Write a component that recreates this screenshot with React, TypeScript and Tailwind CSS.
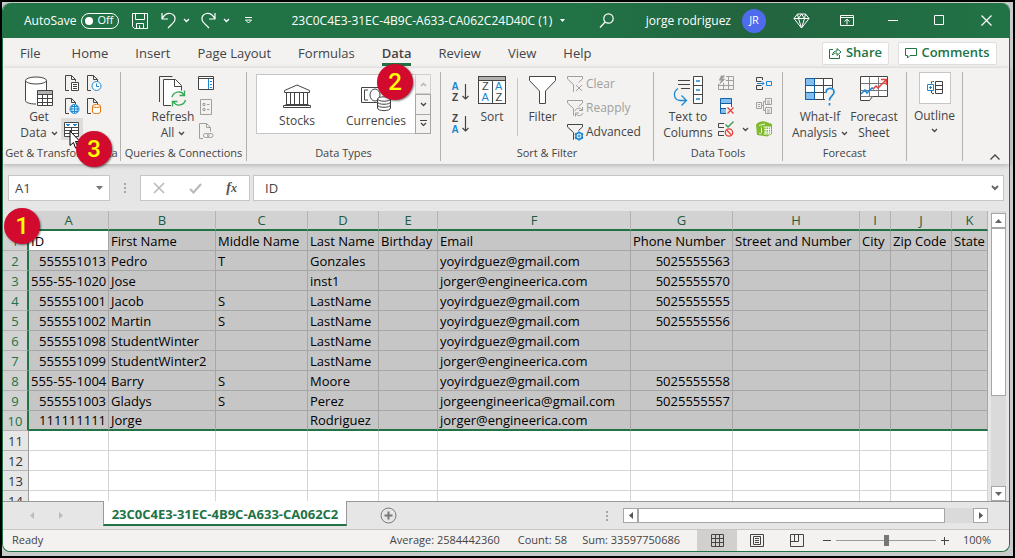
import { useState, type ReactNode } from "react";

const FILE_NAME = "23C0C4E3-31EC-4B9C-A633-CA062C24D40C (1)";
const TABS = ["File", "Home", "Insert", "Page Layout", "Formulas", "Data", "Review", "View", "Help"];

const COLUMNS = [
  { key: "A", width: "w-[80px]" },
  { key: "B", width: "w-[107px]" },
  { key: "C", width: "w-[92px]" },
  { key: "D", width: "w-[71px]" },
  { key: "E", width: "w-[59px]" },
  { key: "F", width: "w-[193px]" },
  { key: "G", width: "w-[102px]" },
  { key: "H", width: "w-[127px]" },
  { key: "I", width: "w-[31px]" },
  { key: "J", width: "w-[61px]" },
  { key: "K", width: "" },
];

const ROWS: string[][] = [
  ["ID", "First Name", "Middle Name", "Last Name", "Birthday", "Email", "Phone Number", "Street and Number", "City", "Zip Code", "State"],
  ["555551013", "Pedro", "T", "Gonzales", "", "yoyirdguez@gmail.com", "5025555563"],
  ["555-55-1020", "Jose", "", "inst1", "", "jorger@engineerica.com", "5025555570"],
  ["555551001", "Jacob", "S", "LastName", "", "yoyirdguez@gmail.com", "5025555555"],
  ["555551002", "Martin", "S", "LastName", "", "yoyirdguez@gmail.com", "5025555556"],
  ["555551098", "StudentWinter", "", "LastName", "", "yoyirdguez@gmail.com", ""],
  ["555551099", "StudentWinter2", "", "LastName", "", "jorger@engineerica.com", ""],
  ["555-55-1004", "Barry", "S", "Moore", "", "yoyirdguez@gmail.com", "5025555558"],
  ["555551003", "Gladys", "S", "Perez", "", "jorgeengineerica@gmail.com", "5025555557"],
  ["111111111", "Jorge", "", "Rodriguez", "", "jorger@engineerica.com", ""],
  [],
  [],
  [],
  [],
];
const LAST_SELECTED = 9;

export default function App() {
  return (
    <div className="h-screen overflow-hidden bg-black p-[2px] font-['Open_Sans','Noto_Sans',sans-serif] text-xs text-[#444]">
      <div className="h-full bg-[#c9cbca] pt-px pr-[3px] pb-1">
        <div className="relative flex h-full flex-col rounded-lg border border-t-0 border-[#217346] bg-[#e6e6e6]">
          <TitleBar />
          <TabBar />
          <Ribbon />
          <FormulaBar />
          <Grid />
          <SheetBar />
          <StatusBar />
          <Badge className="top-[205px] left-[1px]">1</Badge>
          <Badge className="top-[61px] left-[374px]">2</Badge>
          <Badge className="top-[128px] left-[73px]">3</Badge>
        </div>
      </div>
    </div>
  );
}

function Badge({ className, children }: { className: string; children: ReactNode }) {
  return (
    <span
      className={`absolute flex size-9 items-center justify-center rounded-full bg-[#d20a2e] font-['Roboto','Liberation_Sans',sans-serif] text-2xl font-medium text-[#ffff00] shadow-[1px_1px_2px_rgba(0,0,0,0.5)] ${className}`}
    >
      {children}
    </span>
  );
}

function Chevron({ className = "" }: { className?: string }) {
  return (
    <svg width="7" height="5" viewBox="0 0 7 5" className={`inline-block shrink-0 ${className}`} fill="none" stroke="currentColor" strokeWidth="1.3">
      <path d="M1 1l2.500 2.500L6 1" />
    </svg>
  );
}

/* ---------- title bar ---------- */

function TitleBar() {
  const [autoSave, setAutoSave] = useState(false);
  return (
    <header className="flex h-[35px] shrink-0 items-center rounded-t-lg bg-[#217346] pl-[21px] text-white">
      <span>AutoSave</span>
      <button
        role="switch"
        aria-checked={autoSave}
        aria-label="AutoSave"
        onClick={() => setAutoSave(!autoSave)}
        className="ml-[5px] flex h-4 w-[38px] items-center justify-between rounded-full border border-white pr-[5px] pl-[3px] text-[11px]"
      >
        <span className="size-2 rounded-full bg-white" />
        Off
      </button>
      <button aria-label="Save" className="ml-[13px]">
        <svg width="16" height="16" viewBox="0 0 16 16" fill="none" stroke="white">
          <path d="M.5.5h15v15h-13l-2-2zM3.500.5v6h9v-6M4.500 15.500v-5h7v5M7.500 15.500v-3" />
        </svg>
      </button>
      <button aria-label="Undo" className="ml-[13px] flex items-center gap-[7px]">
        <svg width="15" height="17" viewBox="0 0 15 17" fill="none" stroke="white" strokeWidth="1.200">
          <path d="M1 1v6h6M1 7c2-4 5-6 8.500-5.500C13 2 15 5.500 13.500 9c-.7 1.500-3 3.500-6.500 7" />
        </svg>
        <Chevron />
      </button>
      <button aria-label="Redo" className="ml-[11px] flex items-center gap-[7px]">
        <svg width="15" height="17" viewBox="0 0 15 17" fill="none" stroke="white" strokeWidth="1.200">
          <path d="M14 1v6H8M14 7c-2-4-5-6-8.500-5.500C2 2 0 5.500 1.500 9c.7 1.500 3 3.500 6.500 7" />
        </svg>
        <Chevron />
      </button>
      <button aria-label="Customize Quick Access Toolbar" className="ml-[14px]">
        <svg width="9" height="7" viewBox="0 0 9 7" fill="none" stroke="white">
          <path d="M1 .5h7M1.500 3l3 3 3-3z" />
        </svg>
      </button>
      <button className="ml-[38px] flex items-center gap-2 whitespace-nowrap">
        {FILE_NAME}
        <svg width="5" height="3" viewBox="0 0 5 3" fill="white"><path d="M0 0h5L2.500 3z" /></svg>
      </button>
      <div className="ml-3 flex h-full flex-1 items-center justify-end rounded-tr-lg bg-linear-to-r from-[#217346] via-[#22643f] via-40% to-[#217346] pr-[17px]">
        <button aria-label="Search" className="mr-8">
          <svg width="15" height="16" viewBox="0 0 15 16" fill="none" stroke="white" strokeWidth="1.200">
            <circle cx="9.500" cy="5.500" r="4.700" />
            <path d="M6.200 9L1 14.500" />
          </svg>
        </button>
        <span className="whitespace-nowrap">jorge rodriguez</span>
        <button aria-label="Account" className="ml-[11px] size-6 rounded-full bg-[#4f6bed] text-[11px]">JR</button>
        <button aria-label="Premium" className="ml-[27px]">
          <svg width="17" height="16" viewBox="0 0 17 16" fill="none" stroke="white" strokeLinejoin="round">
            <path d="M4.500 1h8L16 5.500 8.500 15 1 5.500zM1 5.500h15M4.500 1l1 4.500 3 9.500 3-9.500 1-4.500M5.500 5.500l3-4.500 3 4.500" />
          </svg>
        </button>
        <button aria-label="Ribbon display options" className="ml-[30px]">
          <svg width="14" height="11" viewBox="0 0 14 11" fill="none" stroke="white">
            <path d="M.5.5h13v10H.5zM.5 2.500h13M7 9.500v-5M4.500 6.500L7 4.200l2.500 2.300" />
          </svg>
        </button>
        <button aria-label="Minimize" className="ml-[34px]">
          <svg width="10" height="10" viewBox="0 0 10 10" stroke="white"><path d="M0 4.500h10" /></svg>
        </button>
        <button aria-label="Maximize" className="ml-9">
          <svg width="11" height="11" viewBox="0 0 11 11" fill="none" stroke="white"><path d="M.5.500h9v9h-9z" /></svg>
        </button>
        <button aria-label="Close" className="ml-9">
          <svg width="11" height="11" viewBox="0 0 11 11" fill="none" stroke="white" strokeWidth="1.200"><path d="M.5.500l10 10M10.500.500l-10 10" /></svg>
        </button>
      </div>
    </header>
  );
}

function TabBar() {
  return (
    <nav className="flex h-[30px] shrink-0 items-center bg-[#f3f2f1] pr-3 pl-[17px] text-[13px]">
      <div className="flex h-full flex-1 items-end gap-[27px] pb-[2px]">
        {TABS.map((tab) => (
          <a
            key={tab}
            href="#"
            className={`border-b-[3px] leading-[19px] whitespace-nowrap first:mr-1 ${
              tab === "Data" ? "border-[#217346] font-semibold" : "border-transparent"
            }`}
          >
            {tab}
          </a>
        ))}
      </div>
      <button className="mr-[9px] flex h-[23px] w-[67px] items-center justify-center gap-1 rounded-xs border border-[#e1dfdd] bg-white font-semibold text-[#217346]">
        <svg width="13" height="12" viewBox="0 0 13 12" fill="none" stroke="currentColor">
          <path d="M4 2.500H.5v9h10V8M3.500 8c.5-3 2-4 4.500-4V1.500L12 5 8 8.500V6C6 6 4.500 6.500 3.500 8z" />
        </svg>
        Share
      </button>
      <button className="flex h-[23px] w-[99px] items-center justify-center gap-1 rounded-xs border border-[#e1dfdd] bg-white font-semibold text-[#217346]">
        <svg width="12" height="11" viewBox="0 0 12 11" fill="none" stroke="currentColor">
          <path d="M.5.500h11v7H5L2.500 10V7.500h-2z" />
        </svg>
        Comments
      </button>
    </nav>
  );
}

/* ---------- ribbon ---------- */

function Group({ label, className, children }: { label: string; className: string; children: ReactNode }) {
  return (
    <section className={`flex shrink-0 flex-col border-r border-[#b3b0ad] ${className}`}>
      <div className="flex flex-1 items-start">{children}</div>
      <h2 className="flex h-4 justify-center text-[11px] leading-4 whitespace-nowrap">{label}</h2>
    </section>
  );
}

function BigButton({
  icon,
  lines,
  menu = false,
  className = "",
}: {
  icon: ReactNode;
  lines: string[];
  menu?: boolean;
  className?: string;
}) {
  return (
    <button className={`flex shrink-0 flex-col items-center pt-1 leading-4 whitespace-nowrap ${className}`}>
      <span className="flex h-[33px] items-start">{icon}</span>
      {lines.map((line, i) => (
        <span key={line} className="flex items-center gap-1">
          {line}
          {menu && i === lines.length - 1 && <Chevron />}
        </span>
      ))}
    </button>
  );
}

function IconButton({ label, className = "", children }: { label: string; className?: string; children: ReactNode }) {
  return (
    <button aria-label={label} className={`flex items-center justify-center ${className}`}>
      {children}
    </button>
  );
}

function Ribbon() {
  return (
    <div className="z-0 flex h-24 shrink-0 bg-[#f3f2f1] pt-1 pb-[3px] shadow-[0_1px_5px_rgba(0,0,0,0.25)]">
      <Group label="Get & Transform Data" className="w-[118px]">
        <BigButton icon={<GetDataIcon />} lines={["Get", "Data"]} menu className="ml-[14px] w-[44px]" />
        <div className="grid grid-cols-[22px_22px]">
          <IconButton label="From Text/CSV" className="h-[22px]">
            <PageIcon>
              <path d="M7.500 7.500h7v8h-7z" fill="white" stroke="#444" />
              <path d="M9 9.500h4M9 11.500h4M9 13.500h4" stroke="#444" />
            </PageIcon>
          </IconButton>
          <IconButton label="Recent Sources" className="h-[22px]">
            <PageIcon>
              <circle cx="10.500" cy="11" r="4.500" fill="white" stroke="#1e88d2" />
              <path d="M10.500 8.500v3h2.500" stroke="#1e88d2" />
            </PageIcon>
          </IconButton>
          <IconButton label="From Web" className="h-6">
            <PageIcon>
              <circle cx="10.500" cy="11" r="4.500" fill="white" stroke="#1e88d2" />
              <path d="M6 11h9M10.500 6.500v9M8.500 7c-1 3-1 5 0 8M12.500 7c1 3 1 5 0 8M7 8.500h7M7 13.500h7" stroke="#1e88d2" />
            </PageIcon>
          </IconButton>
          <IconButton label="Existing Connections" className="h-6">
            <PageIcon>
              <path d="M6.500 8v6c0 2 8 2 8 0V8" fill="white" stroke="#e8740c" />
              <ellipse cx="10.500" cy="8" rx="4" ry="1.500" fill="white" stroke="#e8740c" />
            </PageIcon>
          </IconButton>
          <IconButton label="From Table/Range" className="relative h-[22px] bg-[#dddcdb]">
            <TableIcon />
            <svg width="12" height="19" viewBox="0 0 12 19" className="absolute top-3 left-2" fill="white" stroke="black">
              <path d="M1 1v14.500l3.500-3L6.500 18 9 17l-2.500-5.500H11z" />
            </svg>
          </IconButton>
        </div>
      </Group>

      <Group label="Queries & Connections" className="w-[126px]">
        <BigButton icon={<RefreshIcon />} lines={["Refresh", "All"]} menu className="ml-7 w-[48px]" />
        <div className="ml-[1px] flex flex-col">
          <IconButton label="Queries & Connections" className="h-[22px] w-4">
            <svg width="16" height="14" viewBox="0 0 16 14" fill="none" stroke="#444">
              <path d="M.5.500h15v13H.5z" fill="white" />
              <path d="M.5 2.500h15" />
              <path d="M10.500 3v10" stroke="#1e88d2" />
              <path d="M12 5.500h2M12 8.500h2M12 11.500h2" stroke="#1e88d2" />
            </svg>
          </IconButton>
          <IconButton label="Properties" className="h-[26px] w-4">
            <svg width="12" height="16" viewBox="0 0 12 16" fill="none" stroke="#a19f9d">
              <path d="M.5.500h11v15H.5z" />
              <path d="M3 4.500h2v2H3zM3 9.500h2v2H3zM7 5.500h2.500M7 10.500h2.500" />
            </svg>
          </IconButton>
          <IconButton label="Edit Links" className="h-[22px] w-4">
            <svg width="15" height="16" viewBox="0 0 15 16" fill="none" stroke="#a19f9d">
              <path d="M4 15.500H.5V.500h7l4 4v4M7.500.500v4h4" />
              <rect x="4.500" y="10.500" width="5.500" height="4" rx="2" />
              <rect x="8.500" y="10.500" width="5.500" height="4" rx="2" />
            </svg>
          </IconButton>
        </div>
      </Group>

      <Group label="Data Types" className="w-[194px]">
        <div className="mt-[2px] ml-[9px] flex h-[60px] w-[175px] border border-[#c8c6c4] bg-white">
          <button className="flex w-[80px] flex-col items-center pt-[9px] leading-4">
            <span className="h-[29px]"><BankIcon /></span>
            Stocks
          </button>
          <button className="flex flex-1 flex-col items-center pt-[9px] leading-4">
            <span className="h-[29px]"><MoneyIcon /></span>
            Currencies
          </button>
          <div className="-my-px -mr-px flex w-4 flex-col">
            <IconButton label="Scroll up" className="flex-1 border border-[#d2d0ce] bg-[#f3f2f1] text-[#b3b0ad]">
              <Chevron className="rotate-180" />
            </IconButton>
            <IconButton label="Scroll down" className="flex-1 border border-[#a6a6a6] bg-[#f3f2f1]">
              <Chevron />
            </IconButton>
            <IconButton label="More data types" className="flex-1 border border-t-0 border-[#a6a6a6] bg-[#f3f2f1]">
              <svg width="7" height="7" viewBox="0 0 7 7" fill="none" stroke="currentColor">
                <path d="M0 .5h7M1 3l2.500 2.500L6 3" strokeWidth="1.200" />
              </svg>
            </IconButton>
          </div>
        </div>
      </Group>

      <Group label="Sort & Filter" className="w-[213px]">
        <div className="ml-[10px] flex flex-col gap-[10px] pt-[9px]">
          <IconButton label="Sort A to Z"><SortIcon top="A" bottom="Z" /></IconButton>
          <IconButton label="Sort Z to A"><SortIcon top="Z" bottom="A" /></IconButton>
        </div>
        <BigButton icon={<SortDialogIcon />} lines={["Sort"]} className="ml-[7px] w-[32px]" />
        <span className="mt-[6px] ml-[9px] h-[58px] w-px bg-[#c8c6c4]" />
        <BigButton icon={<FunnelIcon />} lines={["Filter"]} className="ml-[8px] w-[33px]" />
        <div className="ml-[8px] flex flex-col">
          <FilterButton label="Clear" disabled>
            <path d="M9 9l6 6M15 9l-6 6" stroke="#a19f9d" />
          </FilterButton>
          <FilterButton label="Reapply" disabled>
            <path d="M8 11c1-3 5-4 7-1M15.500 7v3.500H12M16 13c-1 3-5 3.500-7 1M8.500 16.500V13H12" stroke="#a19f9d" />
          </FilterButton>
          <FilterButton label="Advanced">
            <circle cx="12" cy="12" r="3.200" stroke="#1e88d2" strokeWidth="1.500" />
            <circle cx="12" cy="12" r="1" stroke="#1e88d2" />
            <path d="M12 7.500v1.300M12 15.200v1.300M8 9.700l1.200.7M14.800 13.600l1.200.7M8 14.300l1.200-.7M14.800 10.400l1.200-.7" stroke="#1e88d2" strokeWidth="2" />
          </FilterButton>
        </div>
      </Group>

      <Group label="Data Tools" className="w-[129px]">
        <BigButton icon={<TextToColumnsIcon />} lines={["Text to", "Columns"]} className="ml-[9px] w-[50px]" />
        <div className="ml-[5px] grid grid-cols-[16px_22px_16px] items-center">
          <IconButton label="Flash Fill" className="h-[22px]"><FlashFillIcon /></IconButton>
          <span />
          <IconButton label="Consolidate" className="h-[22px]">
            <svg width="16" height="13" viewBox="0 0 16 13" fill="none" stroke="#444">
              <path d="M6.500 3V.500h-6v4h5M5.500 8.500h-5v4h6V10" />
              <path d="M1 6.500h7M6 4.500l2 2-2 2" stroke="#1e88d2" />
              <path d="M10.500 4.500h5v4h-5z" stroke="#1e88d2" />
            </svg>
          </IconButton>
          <IconButton label="Remove Duplicates" className="h-6">
            <svg width="16" height="16" viewBox="0 0 16 16" fill="none">
              <path d="M2.500.500h11v15h-11z" fill="white" stroke="#1160a8" />
              <path d="M3 1h10v4H3zM3 11h6v4H3z" fill="#83beec" />
              <path d="M3 5.500h10M3 10.500h10" stroke="#1160a8" />
              <path d="M8 9h8v7H8z" fill="#f3f2f1" />
              <path d="M9.500 9.500l6 6M15.500 9.500l-6 6" stroke="#e8403a" strokeWidth="1.300" />
            </svg>
          </IconButton>
          <span />
          <IconButton label="Relationships" className="h-6">
            <svg width="16" height="16" viewBox="0 0 16 16" fill="none" stroke="#a19f9d">
              <path d="M.5 4.500h5v6h-5zM9.500.500h6v6h-6zM9.500 9.500h6v6h-6zM5.500 7.500h2v-4h2M7.500 7.500v5h2M2 6.500h2M2 8.500h2M11 3h3M11 5h3M11 12h3M11 14h3" />
            </svg>
          </IconButton>
          <IconButton label="Data Validation" className="h-[22px]">
            <svg width="16" height="16" viewBox="0 0 16 16" fill="none" stroke="#444">
              <path d="M6 2.500H.5v4H6M6 10.500H.5v4H6" />
              <path d="M7.500 3.500l2.500 2.500L15.500.5" stroke="#2f9e44" strokeWidth="1.300" />
              <circle cx="11" cy="11.500" r="3.700" stroke="#e8403a" strokeWidth="1.300" />
              <path d="M8.500 9l5 5" stroke="#e8403a" strokeWidth="1.300" />
            </svg>
          </IconButton>
          <Chevron className="justify-self-center" />
          <IconButton label="Manage Data Model" className="h-[22px]">
            <svg width="16" height="16" viewBox="0 0 16 16" fill="none">
              <path d="M0 3.500C3 .5 7-.5 10.500 1L16 3v10l-5 2.500L1 14z" fill="#7fba2c" />
              <path d="M3 4.500l6-1.500M7.500 6h7v7h-7M10 6v7M12.500 6v7M8 8.500h6.500M8 11h6.500M5.500 6.500v5c0 1-1.500 1.500-2.500.5" stroke="white" strokeWidth=".9" />
            </svg>
          </IconButton>
        </div>
      </Group>

      <Group label="Forecast" className="w-[124px]">
        <BigButton icon={<WhatIfIcon />} lines={["What-If", "Analysis"]} menu className="ml-[9px] w-[56px]" />
        <BigButton icon={<ForecastIcon />} lines={["Forecast", "Sheet"]} className="w-[52px]" />
      </Group>

      <Group label="" className="w-[56px]">
        <button className="flex w-full flex-col items-center leading-6">
          <span className="flex size-8 items-center justify-center border border-[#c8c6c4] bg-white">
            <svg width="16" height="14" viewBox="0 0 16 14" fill="none" stroke="#444">
              <path d="M8.500.500h7v12h-7zM8.500 4.500h7M8.500 8.500h7" fill="white" />
              <path d="M4.500 2.500v-2H7M4.500 10v2.500H7" strokeDasharray="2 1" />
              <path d="M.5 3.500h6v6h-6zM2 6.500h3M3.500 5v3" stroke="#1e88d2" />
            </svg>
          </span>
          Outline
          <Chevron />
        </button>
      </Group>

      <button aria-label="Collapse the Ribbon" className="mr-[9px] mb-px ml-auto self-end">
        <svg width="10" height="6" viewBox="0 0 10 6" fill="none" stroke="#444" strokeWidth="1.300"><path d="M.5 5.500L5 1l4.500 4.500" /></svg>
      </button>
    </div>
  );
}

function FilterButton({ label, disabled = false, children }: { label: string; disabled?: boolean; children: ReactNode }) {
  return (
    <button disabled={disabled} className={`flex h-6 items-center gap-[2px] ${disabled ? "text-[#a19f9d]" : ""}`}>
      <svg width="17" height="17" viewBox="0 0 17 17" fill="none">
        <path d="M7 15.500H6.500v-7L.5 3V.500h15V3l-4 3.500" stroke={disabled ? "#a19f9d" : "#444"} />
        {children}
      </svg>
      {label}
    </button>
  );
}

function PageIcon({ children }: { children: ReactNode }) {
  return (
    <svg width="16" height="16" viewBox="0 0 16 16" fill="none">
      <path d="M5 15.500H1.500V.500h6l4 4v2M7.500.500v4h4" stroke="#444" />
      {children}
    </svg>
  );
}

function GetDataIcon() {
  return (
    <svg width="28" height="31" viewBox="0 0 28 31" fill="none" stroke="#444">
      <path d="M.5 4.500v20c0 2 4 3.500 10.500 3.500h1V14.500h9.500v-10" fill="white" stroke="none" />
      <path d="M.5 4.500v20c0 2 4 3.500 10.500 3.500M21.500 4.500V14" />
      <ellipse cx="11" cy="4.500" rx="10.500" ry="3.500" fill="white" />
      <path d="M12.500 14.500h15v15h-15z" fill="white" />
      <path d="M13 15h14v3H13z" fill="#b3b0ad" stroke="none" />
      <path d="M12.500 18.500h15M12.500 22.500h15M12.500 26.500h15M17.500 18v12M22.500 18v12" />
    </svg>
  );
}

function TableIcon() {
  return (
    <svg width="16" height="15" viewBox="0 0 16 15" fill="none" stroke="#444">
      <path d="M.5.500h14v14H.5z" fill="white" />
      <path d="M.5 5.500h14M.5 8.500h14M.5 11.500h14M7.500 5.500v9" />
      <path d="M2 2.500h4M9 2.500h4M3 3.500h2M10 3.500h2" stroke="#1e88d2" />
    </svg>
  );
}

function RefreshIcon() {
  return (
    <svg width="28" height="31" viewBox="0 0 28 31" fill="none">
      <path d="M.5 26V.500h13" stroke="#444" />
      <path d="M4.500 29.500V3.500h12l6 6v5L12 20v9.500z" fill="white" />
      <path d="M12 29.500H4.500V3.500h12l6 6v5M15.500 3.500v7h7" stroke="#444" />
      <path d="M13 21c1.500-5.500 9-7 12-2M25.500 14.500v5h-5M26.500 24c-1.500 5.500-9 7-12 2M13.500 30.500v-5h5" stroke="#35a853" strokeWidth="1.300" />
    </svg>
  );
}

function BankIcon() {
  return (
    <svg width="28" height="25" viewBox="0 0 28 25" fill="none" stroke="#444">
      <path d="M1.500 8.500V6.500L14 1l12.500 5.500v2zM3.500 8.500v12M7.500 8.500v12M11.500 8.500v12M16.500 8.500v12M20.500 8.500v12M24.500 8.500v12M2.500 20.500h23M.5 23.500h27v-2H.5z" />
    </svg>
  );
}

function MoneyIcon() {
  return (
    <svg width="31" height="28" viewBox="0 0 31 28" fill="none" stroke="#444">
      <path d="M.5 3.500h28v15H.5z" />
      <path d="M7 6H3.500v10H7M22 6h3.500v5" />
      <ellipse cx="14" cy="11" rx="5" ry="6" />
      <path d="M16.500 15v9c0 3.500 13 3.500 13 0v-9" fill="white" />
      <ellipse cx="23" cy="15" rx="6.500" ry="2.200" fill="white" />
      <path d="M16.500 18c0 3 13 3 13 0M16.500 21c0 3 13 3 13 0" />
    </svg>
  );
}

function SortIcon({ top, bottom }: { top: string; bottom: string }) {
  return (
    <span className="flex items-center gap-[3px]">
      <span className="w-2 font-['Liberation_Sans',sans-serif] text-[10px] leading-[11px] font-bold">
        <span className={`block ${top === "A" ? "text-[#1e88d2]" : ""}`}>{top}</span>
        <span className={`block ${bottom === "A" ? "text-[#1e88d2]" : ""}`}>{bottom}</span>
      </span>
      <svg width="7" height="17" viewBox="0 0 7 17" fill="none" stroke="#444" strokeWidth="1.200">
        <path d="M3.500 0v15M.5 12l3 3 3-3" />
      </svg>
    </span>
  );
}

function SortDialogIcon() {
  return (
    <span className="flex h-7 w-[28px] flex-col border border-[#444] bg-white font-['Liberation_Sans',sans-serif] text-[11px] leading-[11px]">
      <span className="h-1 shrink-0 border-b border-[#444] bg-[#b3b0ad]" />
      <span className="flex flex-1 text-center">
        <span className="flex-1 border-r border-[#444]">
          <span className="block">Z</span>
          <span className="block text-[#1e88d2]">A</span>
        </span>
        <span className="flex-1">
          <span className="block text-[#1e88d2]">A</span>
          <span className="block">Z</span>
        </span>
      </span>
    </span>
  );
}

function FunnelIcon() {
  return (
    <svg width="28" height="29" viewBox="0 0 28 29" fill="white" stroke="#444">
      <path d="M.5.500h26v4l-10 10.500v12.500h-6V15L.5 4.500z" />
    </svg>
  );
}

function TextToColumnsIcon() {
  return (
    <svg width="31" height="31" viewBox="0 0 31 31" fill="none">
      <path d="M5 4.500h12M5 8.500h12M8 12.500h9" stroke="#444" strokeWidth="1.200" />
      <path d="M5 12.500c-5 3-5 11 2 12h6M8.500 19.500l5 5-5 5" stroke="#1e88d2" strokeWidth="1.300" />
      <path d="M20.500.500h9v27h-9z" fill="white" stroke="#444" />
      <path d="M20.500 9.500h9M20.500 18.500h9" stroke="#444" />
      <path d="M23 5h4M23 14h4M23 23h4" stroke="#1e88d2" strokeWidth="1.300" />
    </svg>
  );
}

function FlashFillIcon() {
  return (
    <svg width="16" height="16" viewBox="0 0 16 16" fill="none" stroke="#a19f9d">
      <path d="M8 1.500h7.500v13H.5V9M10.500 1.500v13M5.500 8v6.500M8 5.500h7.500M6 10.500h9.500M.5 10.500H6" />
      <path d="M3 .5h4L5 4h2.500L1 10l2-4.500H.8z" fill="#a19f9d" stroke="none" />
    </svg>
  );
}

function WhatIfIcon() {
  return (
    <svg width="30" height="31" viewBox="0 0 30 31" fill="none">
      <path d="M.5 2.500h27v21H.5z" fill="white" />
      <path d="M1 3h8v6H1zM1 17h8v6H1z" fill="#83beec" />
      <path d="M.5 2.500h27V13M9.500 2.500v21M18.500 2.500v21M.5 9.500h27M.5 16.500h20M.5 23.500h20" stroke="#444" />
      <path d="M.5 2.500v21h9v-21zM.5 9.500h9M.5 16.500h9" stroke="#1160a8" />
      <path d="M20 12h10v16H20z" fill="#f3f2f1" />
      <path d="M21 17c0-6 8-6 8-1 0 4-4.500 4-4.500 8.500M24.500 27v2.500" stroke="#1e88d2" strokeWidth="1.700" />
    </svg>
  );
}

function ForecastIcon() {
  return (
    <svg width="29" height="28" viewBox="0 0 29 28" fill="none">
      <path d="M.5.500h27v20h-15l-3 4h-9z" fill="white" stroke="#444" />
      <path d="M.5 20.500h12M9.500.500v20M18.500.500v20M.5 7.500h27M.5 14.500h27" stroke="#777" />
      <path d="M1 18l4-4 2 3 5-5 2 1" stroke="#1e88d2" strokeWidth="1.500" />
      <path d="M13 13l3-3 2 2 8-8M21 3.500h5.500V9" stroke="#e8403a" strokeWidth="1.500" />
    </svg>
  );
}

/* ---------- formula bar ---------- */

function FormulaBar() {
  return (
    <div className="flex h-[47px] shrink-0 items-start pt-[11px] pr-[5px] pl-[5px] text-sm">
      <div className="flex h-[26px] w-[102px] items-center border border-[#c6c6c6] bg-white pr-[6px] pl-[6px]">
        <input aria-label="Name Box" defaultValue="A1" className="w-0 flex-1 bg-transparent text-[13px] outline-none" />
        <svg width="7" height="4" viewBox="0 0 7 4" fill="#777"><path d="M0 0h7L3.500 4z" /></svg>
      </div>
      <Dots className="mx-[14px] mt-2" />
      <div className="flex h-[26px] w-[110px] items-center justify-between border border-[#c6c6c6] bg-white pr-[12px] pl-[12px]">
        <button aria-label="Cancel">
          <svg width="12" height="12" viewBox="0 0 12 12" stroke="#bbb" strokeWidth="1.700"><path d="M1 1l10 10M11 1L1 11" /></svg>
        </button>
        <button aria-label="Enter">
          <svg width="13" height="11" viewBox="0 0 13 11" fill="none" stroke="#bbb" strokeWidth="2.200"><path d="M1 6l3.500 3.500L12 1" /></svg>
        </button>
        <button className="font-['Liberation_Serif',serif] text-sm leading-none font-bold text-[#555] italic">
          f<span className="text-xs">x</span>
        </button>
      </div>
      <div className="ml-[3px] flex h-[26px] flex-1 items-center border border-[#c6c6c6] bg-white pr-1 pl-[11px]">
        <input aria-label="Formula" defaultValue="ID" className="w-0 flex-1 bg-transparent text-[13px] outline-none" />
        <svg width="8" height="6" viewBox="0 0 8 6" fill="none" stroke="#666" strokeWidth="2"><path d="M1 1l3 3 3-3" /></svg>
      </div>
    </div>
  );
}

function Dots({ className = "" }: { className?: string }) {
  return (
    <span className={`flex w-[2px] shrink-0 flex-col gap-[2px] ${className}`}>
      <span className="h-[2px] bg-[#a6a6a6]" />
      <span className="h-[2px] bg-[#a6a6a6]" />
      <span className="h-[2px] bg-[#a6a6a6]" />
    </span>
  );
}

/* ---------- grid ---------- */

function cellClass(row: number, col: number, value = "") {
  const selected = row <= LAST_SELECTED;
  // numbers sit on the right, anything with a dash is text
  const align = /^\d+$/.test(value) ? "text-right" : "text-left";
  const fill = selected ? (row === 0 && col === 0 ? "bg-white" : "bg-[#c6c6c6]") : "bg-white";
  const right = selected ? "border-r-[#a6a6a6]" : "border-r-[#d4d4d4]";
  const bottom =
    row === LAST_SELECTED ? "border-b-2 border-b-[#217346]" : selected ? "border-b border-b-[#a6a6a6]" : "border-b border-b-[#d4d4d4]";
  return `h-5 overflow-hidden border-r px-[2px] whitespace-nowrap leading-[18px] ${align} ${fill} ${right} ${bottom}`;
}

function Grid() {
  return (
    <div className="flex min-h-0 flex-1 border-b border-[#999]">
      <div className="min-w-0 flex-1 overflow-hidden">
        <table className="w-full table-fixed border-separate border-spacing-0 text-[13px] text-black">
          <colgroup>
            <col className="w-[26px]" />
            {COLUMNS.map((c) => (
              <col key={c.key} className={c.width} />
            ))}
          </colgroup>
          <thead>
            <tr>
              <th className="h-5 border-r border-[#a6a6a6] bg-[#e6e6e6] p-0" />
              {COLUMNS.map((c) => (
                <th
                  key={c.key}
                  scope="col"
                  className="h-5 border-r border-b-2 border-r-[#b3b3b3] border-b-[#217346] bg-[#d2d2d2] p-0 leading-[18px] font-normal text-[#215c3f]"
                >
                  {c.key}
                </th>
              ))}
            </tr>
          </thead>
          <tbody>
            {ROWS.map((row, r) => (
              <tr key={r}>
                <th
                  scope="row"
                  className={`h-5 border-b p-0 leading-[18px] font-normal ${
                    r <= LAST_SELECTED
                      ? "border-r-2 border-r-[#217346] border-b-[#b3b3b3] bg-[#d2d2d2] text-[#217346]"
                      : "border-r border-r-[#999] border-b-[#b3b3b3] bg-[#e6e6e6] text-[#333]"
                  }`}
                >
                  {r + 1}
                </th>
                {COLUMNS.map((c, i) => (
                  <td key={c.key} className={cellClass(r, i, row[i])}>
                    {row[i]}
                  </td>
                ))}
              </tr>
            ))}
          </tbody>
        </table>
      </div>
      <div className="mr-[3px] ml-[3px] flex w-[15px] flex-col bg-[#dadada] pt-[2px]">
        <IconButton label="Scroll up" className="h-[15px] border border-[#a6a6a6] bg-white">
          <svg width="7" height="4" viewBox="0 0 7 4" fill="#666"><path d="M0 4h7L3.500 0z" /></svg>
        </IconButton>
        <div className="flex-[13] border border-[#a6a6a6] bg-white" />
        <div className="flex-[7]" />
        <IconButton label="Scroll down" className="h-[15px] border border-[#a6a6a6] bg-white">
          <svg width="7" height="4" viewBox="0 0 7 4" fill="#666"><path d="M0 0h7L3.500 4z" /></svg>
        </IconButton>
      </div>
    </div>
  );
}

function SheetBar() {
  return (
    <div className="flex h-[27px] shrink-0 items-start">
      <button aria-label="Previous sheet" className="mt-[10px] ml-[27px]">
        <svg width="4" height="7" viewBox="0 0 4 7" fill="#bbb"><path d="M4 0v7L0 3.500z" /></svg>
      </button>
      <button aria-label="Next sheet" className="mt-[10px] ml-[25px]">
        <svg width="4" height="7" viewBox="0 0 4 7" fill="#bbb"><path d="M0 0v7l4-3.500z" /></svg>
      </button>
      <button className="-mt-px ml-10 h-[25px] w-[244px] border-x border-b-2 border-x-[#999] border-b-[#217346] bg-white pt-[3px] text-[13px] leading-5 font-bold whitespace-nowrap text-[#217346]">
        23C0C4E3-31EC-4B9C-A633-CA062C2
      </button>
      <button aria-label="New sheet" className="mt-[5px] ml-[33px]">
        <svg width="17" height="17" viewBox="0 0 17 17" fill="none" stroke="#777">
          <circle cx="8.500" cy="8.500" r="7.500" />
          <path d="M8.500 4.500v8M4.500 8.500h8" strokeWidth="2" />
        </svg>
      </button>
      <Dots className="mt-[9px] mr-[15px] ml-auto" />
      <div className="mt-[6px] mr-[21px] flex h-[15px] w-[365px] bg-[#dadada]">
        <IconButton label="Scroll left" className="w-[15px] border border-[#a6a6a6] bg-white">
          <svg width="4" height="7" viewBox="0 0 4 7" fill="#555"><path d="M4 0v7L0 3.500z" /></svg>
        </IconButton>
        <div className="w-[307px] border border-[#a6a6a6] bg-white" />
        <IconButton label="Scroll right" className="ml-auto w-[15px] border border-[#a6a6a6] bg-white">
          <svg width="4" height="7" viewBox="0 0 4 7" fill="#555"><path d="M0 0v7l4-3.500z" /></svg>
        </IconButton>
      </div>
    </div>
  );
}

function StatusBar() {
  const [zoom, setZoom] = useState(50);
  return (
    <footer className="flex h-[22px] shrink-0 items-center rounded-b-lg border-t border-[#c6c6c6] bg-[#f3f2f1] pr-[18px] pl-[9px] text-[11px] whitespace-nowrap">
      <span className="flex-1">Ready</span>
      <span>Average: 2584442360</span>
      <span className="ml-[18px]">Count: 58</span>
      <span className="mr-[17px] ml-[15px]">Sum: 33597750686</span>
      <IconButton label="Normal view" className="h-full w-10 bg-[#d2d0ce]">
        <svg width="13" height="13" viewBox="0 0 13 13" fill="none" stroke="#444"><path d="M.5.500h12v12H.5zM4.500.500v12M8.500.500v12M.5 4.500h12M.5 8.500h12" /></svg>
      </IconButton>
      <IconButton label="Page layout view" className="h-full w-10">
        <svg width="14" height="13" viewBox="0 0 14 13" fill="none" stroke="#444"><path d="M.5.500h13v12H.5zM3.500 2.500h7v8h-7zM5 4.500h4M5 6.500h4M5 8.500h4" /></svg>
      </IconButton>
      <IconButton label="Page break preview" className="h-full w-10">
        <svg width="14" height="13" viewBox="0 0 14 13" fill="none" stroke="#444"><path d="M.5.500h13v12H.5zM4.500.500v7M8.500.500v7M.5 7.500h8" /></svg>
      </IconButton>
      <button aria-label="Zoom out" className="ml-[6px]">
        <svg width="8" height="8" viewBox="0 0 8 8" stroke="#444"><path d="M0 3.500h8" /></svg>
      </button>
      <input
        type="range"
        aria-label="Zoom"
        value={zoom}
        onChange={(e) => setZoom(Number(e.target.value))}
        className="mx-[5px] h-[11px] w-[100px] appearance-none bg-linear-to-b from-transparent from-45% via-[#444] via-45% to-transparent to-55% [&::-webkit-slider-thumb]:h-[11px] [&::-webkit-slider-thumb]:w-[5px] [&::-webkit-slider-thumb]:appearance-none [&::-webkit-slider-thumb]:bg-[#777]"
      />
      <button aria-label="Zoom in">
        <svg width="8" height="8" viewBox="0 0 8 8" stroke="#444"><path d="M0 3.500h8M3.500 0v8" /></svg>
      </button>
      <span className="ml-[14px]">100%</span>
    </footer>
  );
}
